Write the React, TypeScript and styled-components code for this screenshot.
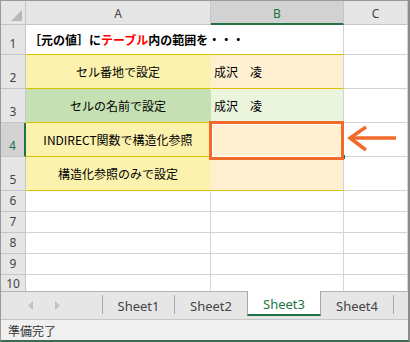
import React from "react";
import styled, { createGlobalStyle } from "styled-components";

const Global = createGlobalStyle`
  html, body { margin: 0; padding: 0; background: #ffffff; }
  * { box-sizing: border-box; }
`;

const JP = `"Noto Sans CJK JP", "Noto Sans", sans-serif`;
const UI = `"Noto Sans", "Noto Sans CJK JP", sans-serif`;

const GRID = "#d4d4d4";
const GOLD = "#dcc100";
const GREEN = "#217346";

const Frame = styled.div`
  position: relative;
  width: 410px;
  height: 342px;
  border-left: 1px solid #9a9a9a;
  border-top: 1px solid #9a9a9a;
  border-right: 2px solid #8c8c8c;
  border-bottom: 2px solid #3f6a52;
  display: flex;
  flex-direction: column;
  overflow: hidden;
  background: #fff;
`;

const Sheet = styled.div`
  display: grid;
  grid-template-columns: 25px 185px 133px 64px;
  grid-template-rows: 24px 30px 34px 34px 34px 34px 21px 21px 21px 21px 16px;
  height: 290px;
  overflow: hidden;
  flex: none;
`;

const Corner = styled.div`
  background: #e6e6e6;
  border-right: 1px solid #c6c6c6;
  border-bottom: 1px solid #c6c6c6;
  display: flex;
  align-items: flex-end;
  justify-content: flex-end;
  padding: 0 3px 3px 0;
`;

const ColHeader = styled.div<{ $selected?: boolean }>`
  background: ${(p) => (p.$selected ? "#d2d2d2" : "#e6e6e6")};
  border-right: 1px solid #c6c6c6;
  border-bottom: ${(p) => (p.$selected ? `2px solid ${GREEN}` : "1px solid #c6c6c6")};
  display: flex;
  align-items: center;
  justify-content: center;
  padding-top: ${(p) => (p.$selected ? "3px" : "2px")};
  font-family: ${UI};
  font-size: 12px;
  color: ${(p) => (p.$selected ? GREEN : "#444")};
`;

const RowHeader = styled.div<{ $selected?: boolean; $last?: boolean }>`
  background: ${(p) => (p.$selected ? "#d2d2d2" : "#e6e6e6")};
  border-right: ${(p) => (p.$selected ? `2px solid ${GREEN}` : "1px solid #c6c6c6")};
  border-bottom: ${(p) => (p.$last ? "none" : "1px solid #c6c6c6")};
  display: flex;
  align-items: flex-end;
  justify-content: center;
  padding-bottom: ${(p) => (p.$last ? "0" : "3px")};
  font-family: ${UI};
  font-size: 12px;
  line-height: 14px;
  color: ${(p) => (p.$selected ? GREEN : "#444")};
`;

const Cell = styled.div<{ $bg?: string; $line?: string; $center?: boolean; $noRight?: boolean; $last?: boolean }>`
  background: ${(p) => p.$bg || "#fff"};
  border-right: 1px solid ${(p) => (p.$noRight ? p.$bg : GRID)};
  border-bottom: ${(p) => (p.$last ? "none" : `1px solid ${p.$line || GRID}`)};
  display: flex;
  align-items: center;
  justify-content: ${(p) => (p.$center ? "center" : "flex-start")};
  padding: 0 3px;
  font-family: ${JP};
  font-size: 12px;
  color: #000;
  white-space: nowrap;
  overflow: visible;
  position: relative;
`;

const Title = styled.span`
  font-weight: 700;
  position: relative;
  z-index: 1;
`;

const Red = styled.span`
  color: #ff0000;
`;

const TabBar = styled.div`
  height: 28px;
  flex: none;
  display: flex;
  align-items: stretch;
  background: #e6e6e6;
  border-top: 1px solid #b4b4b4;
`;

const Nav = styled.div`
  width: 101px;
  display: flex;
  align-items: center;
  padding-left: 27px;
  gap: 22px;
`;

const Sep = styled.div`
  width: 1px;
  background: #a8a8a8;
  margin: 3px 0 5px;
`;

const Tab = styled.div<{ $active?: boolean; $w: number }>`
  width: ${(p) => p.$w}px;
  display: flex;
  align-items: center;
  justify-content: center;
  font-family: ${UI};
  font-size: 13px;
  color: ${(p) => (p.$active ? GREEN : "#444")};
  background: ${(p) => (p.$active ? "#ffffff" : "transparent")};
  border-left: ${(p) => (p.$active ? "1px solid #a8a8a8" : "none")};
  border-right: ${(p) => (p.$active ? "1px solid #a8a8a8" : "none")};
  border-bottom: ${(p) => (p.$active ? `2px solid ${GREEN}` : "none")};
  margin-top: ${(p) => (p.$active ? "-1px" : "0")};
  margin-bottom: ${(p) => (p.$active ? "3px" : "0")};
  padding-top: ${(p) => (p.$active ? "3px" : "0")};
`;

const StatusBar = styled.div`
  flex: 1;
  background: #f0f0f0;
  border-top: 1px solid #c6c6c6;
  display: flex;
  align-items: center;
  padding-left: 7px;
  font-family: ${JP};
  font-size: 12px;
  color: #333;
`;

const Highlight = styled.div`
  position: absolute;
  left: 208px;
  top: 120px;
  width: 135px;
  height: 39px;
  border: 3px solid #f26a2a;
  box-shadow: inset 1px 1px 0 #fff, inset 0 -1px 0 #fff;
  pointer-events: none;
`;

const FillHandle = styled.div`
  position: absolute;
  left: 340px;
  top: 154px;
  width: 4px;
  height: 4px;
  background: ${GREEN};
`;

const ArrowSvg = styled.svg`
  position: absolute;
  left: 343px;
  top: 123px;
`;

const CornerTri = () => (
  <svg width="11" height="11" viewBox="0 0 11 11">
    <polygon points="11,0 11,11 0,11" fill="#b8b8b8" />
  </svg>
);

const NavArrow = ({ dir }: { dir: "l" | "r" }) => (
  <svg width="5" height="9" viewBox="0 0 5 9">
    {dir === "l" ? (
      <polygon points="5,0 5,9 0,4.5" fill="#c2c2c2" />
    ) : (
      <polygon points="0,0 0,9 5,4.5" fill="#c2c2c2" />
    )}
  </svg>
);

const YELLOW = "#fbf2ad";
const GREEN_A = "#c5e0b3";
const PEACH = "#fff0d1";
const GREEN_B = "#ebf5dd";

type RowDef = { a: string; b: string; aBg: string; bBg: string };

const dataRows: RowDef[] = [
  { a: "セル番地で設定", b: "成沢　凌", aBg: YELLOW, bBg: PEACH },
  { a: "セルの名前で設定", b: "成沢　凌", aBg: GREEN_A, bBg: GREEN_B },
  { a: "INDIRECT関数で構造化参照", b: "", aBg: YELLOW, bBg: PEACH },
  { a: "構造化参照のみで設定", b: "", aBg: YELLOW, bBg: PEACH },
];

export default function App() {
  return (
    <>
      <Global />
      <Frame>
        <Sheet>
          <Corner>
            <CornerTri />
          </Corner>
          <ColHeader>A</ColHeader>
          <ColHeader $selected>B</ColHeader>
          <ColHeader>C</ColHeader>

          <RowHeader>1</RowHeader>
          <Cell $line={GOLD} $noRight $bg="#fff">
            <Title>
              ［元の値］に<Red>テーブル</Red>内の範囲を・・・
            </Title>
          </Cell>
          <Cell $line={GOLD} />
          <Cell />

          {dataRows.map((r, i) => (
            <React.Fragment key={i}>
              <RowHeader $selected={i === 2}>{i + 2}</RowHeader>
              <Cell $bg={r.aBg} $line={GOLD} $center $noRight>
                {r.a}
              </Cell>
              <Cell $bg={r.bBg} $line={GOLD}>
                {r.b}
              </Cell>
              <Cell />
            </React.Fragment>
          ))}

          {[6, 7, 8, 9, 10].map((n) => (
            <React.Fragment key={n}>
              <RowHeader $last={n === 10}>{n}</RowHeader>
              <Cell $last={n === 10} />
              <Cell $last={n === 10} />
              <Cell $last={n === 10} />
            </React.Fragment>
          ))}
        </Sheet>

        <TabBar>
          <Nav>
            <NavArrow dir="l" />
            <NavArrow dir="r" />
          </Nav>
          <Sep />
          <Tab $w={71}>Sheet1</Tab>
          <Sep />
          <Tab $w={72}>Sheet2</Tab>
          <Tab $w={74} $active>
            Sheet3
          </Tab>
          <Tab $w={72}>Sheet4</Tab>
          <Sep />
        </TabBar>

        <StatusBar>準備完了</StatusBar>

        <FillHandle />
        <Highlight />
        <ArrowSvg width="56" height="30" viewBox="344 124 56 30">
          <path d="M352 138 L396 138" stroke="#f26a2a" strokeWidth="3.5" fill="none" />
          <path
            d="M366 127 L350 138 L366 150"
            stroke="#f26a2a"
            strokeWidth="3.5"
            fill="none"
            strokeLinejoin="miter"
          />
        </ArrowSvg>
      </Frame>
    </>
  );
}
